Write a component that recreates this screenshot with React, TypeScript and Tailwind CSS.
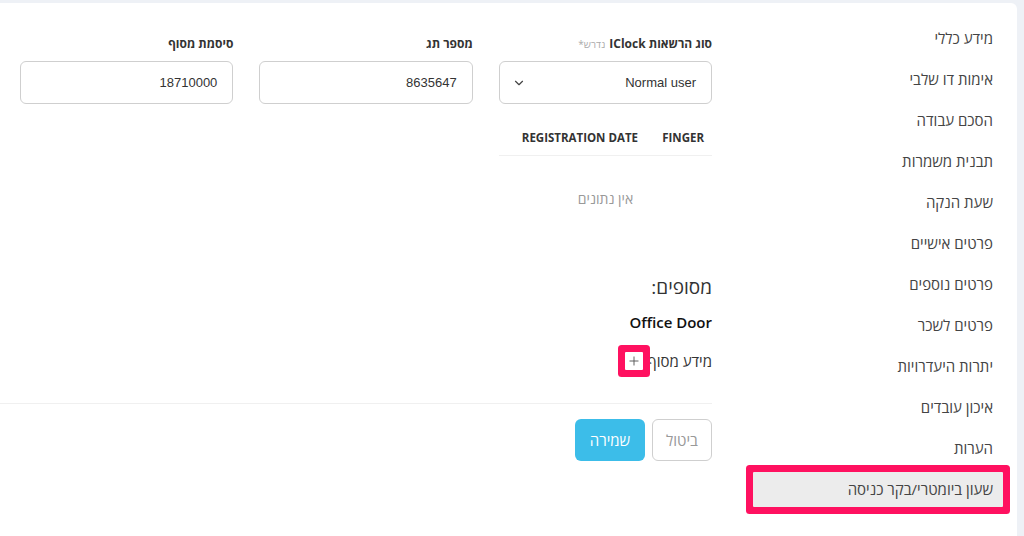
import { ChevronDown, Plus } from 'lucide-react'

const MENU = [
  'מידע כללי',
  'אימות דו שלבי',
  'הסכם עבודה',
  'תבנית משמרות',
  'שעת הנקה',
  'פרטים אישיים',
  'פרטים נוספים',
  'פרטים לשכר',
  'יתרות היעדרויות',
  'איכון עובדים',
  'הערות',
  'שעון ביומטרי/בקר כניסה',
]

const FONT = { fontFamily: '"Open Sans", "Liberation Sans", sans-serif' }
const VALUE_FONT = { fontFamily: '"Liberation Sans", Arial, sans-serif' }

function Field({ label, value }: { label: string; value: string }) {
  return (
    <div>
      <div className="text-[12px] leading-4 font-bold text-[#333] mb-[9px]">{label}</div>
      <div
        className="h-[43px] border border-[#cfcfcf] rounded-[6px] px-[15px] flex items-center text-[13px] text-[#333]"
        style={VALUE_FONT}
      >
        {value}
      </div>
    </div>
  )
}

export default function App() {
  return (
    <div className="h-[536px] bg-[#eef1f6] pt-[3px] pr-[7px] overflow-hidden" style={FONT}>
      <div dir="rtl" className="bg-white h-full rounded-tr-[6px] flex">
        {/* side menu */}
        <nav className="w-[305px] shrink-0 pr-[14px] pl-[41px] pt-[18px] flex flex-col gap-[6px]">
          {MENU.map((item, idx) => {
            const active = idx === MENU.length - 1
            return (
              <div
                key={item}
                className={`h-[35px] shrink-0 pr-[10px] flex items-center text-[15px] text-[#444] ${
                  active ? 'bg-[#ececec] ring-[7px] ring-[#ff1160] rounded-[1px]' : ''
                }`}
              >
                {item}
              </div>
            )
          })}
        </nav>

        {/* content */}
        <div className="w-[712px] shrink-0">
          <div className="pl-[20px] pt-[33px]">
            <div className="grid grid-cols-3 gap-x-[26px]">
              <div>
                <div className="text-[12px] leading-4 font-bold text-[#333] mb-[9px] flex items-baseline gap-[4px]">
                  <span>סוג הרשאות IClock</span>
                  <span className="text-[10px] font-normal text-[#aaa]">נדרש*</span>
                </div>
                <div
                  className="h-[43px] border border-[#cfcfcf] rounded-[6px] pr-[15px] pl-[12px] flex items-center justify-between text-[13px] text-[#333]"
                  style={VALUE_FONT}
                >
                  <span>Normal user</span>
                  <ChevronDown size={14} strokeWidth={2} className="text-[#444]" />
                </div>
              </div>
              <Field label="מספר תג" value="8635647" />
              <Field label="סיסמת מסוף" value="18710000" />
            </div>

            <div className="w-[213px] mt-[16px]">
              <div className="h-[36px] flex items-center border-b border-[#f0f0f0] text-[11.5px] font-bold text-[#333] uppercase">
                <div className="w-[66px] pr-[8px]">Finger</div>
                <div className="pr-[8px]">Registration Date</div>
              </div>
              <div className="py-[33px] text-center text-[14px] leading-5 text-[#999]">אין נתונים</div>

              <div className="text-[19px] leading-6 text-[#333] mt-[33px]">מסופים:</div>
              <div className="text-[15px] leading-5 font-semibold text-[#111] mt-[13px]">Office Door</div>
              <div className="mt-[19px] flex items-center gap-[5px] text-[15px] leading-5 text-[#333]">
                <span>מידע מסוף</span>
                <span className="w-[18px] h-[18px] bg-white ring-[7px] ring-[#ff1160] rounded-[1px] flex items-center justify-center">
                  <Plus size={14} strokeWidth={1.6} className="text-[#555]" />
                </span>
              </div>
            </div>
          </div>

          <div className="mt-[32px] border-t border-[#f0f0f0] pt-[15px] flex gap-[7px]">
            <button className="w-[60px] h-[42px] border border-[#cfcfcf] rounded-[6px] text-[15px] text-[#999] bg-white">
              ביטול
            </button>
            <button className="w-[70px] h-[42px] rounded-[6px] text-[15px] text-white bg-[#3cbde9]">
              שמירה
            </button>
          </div>
        </div>
      </div>
    </div>
  )
}
